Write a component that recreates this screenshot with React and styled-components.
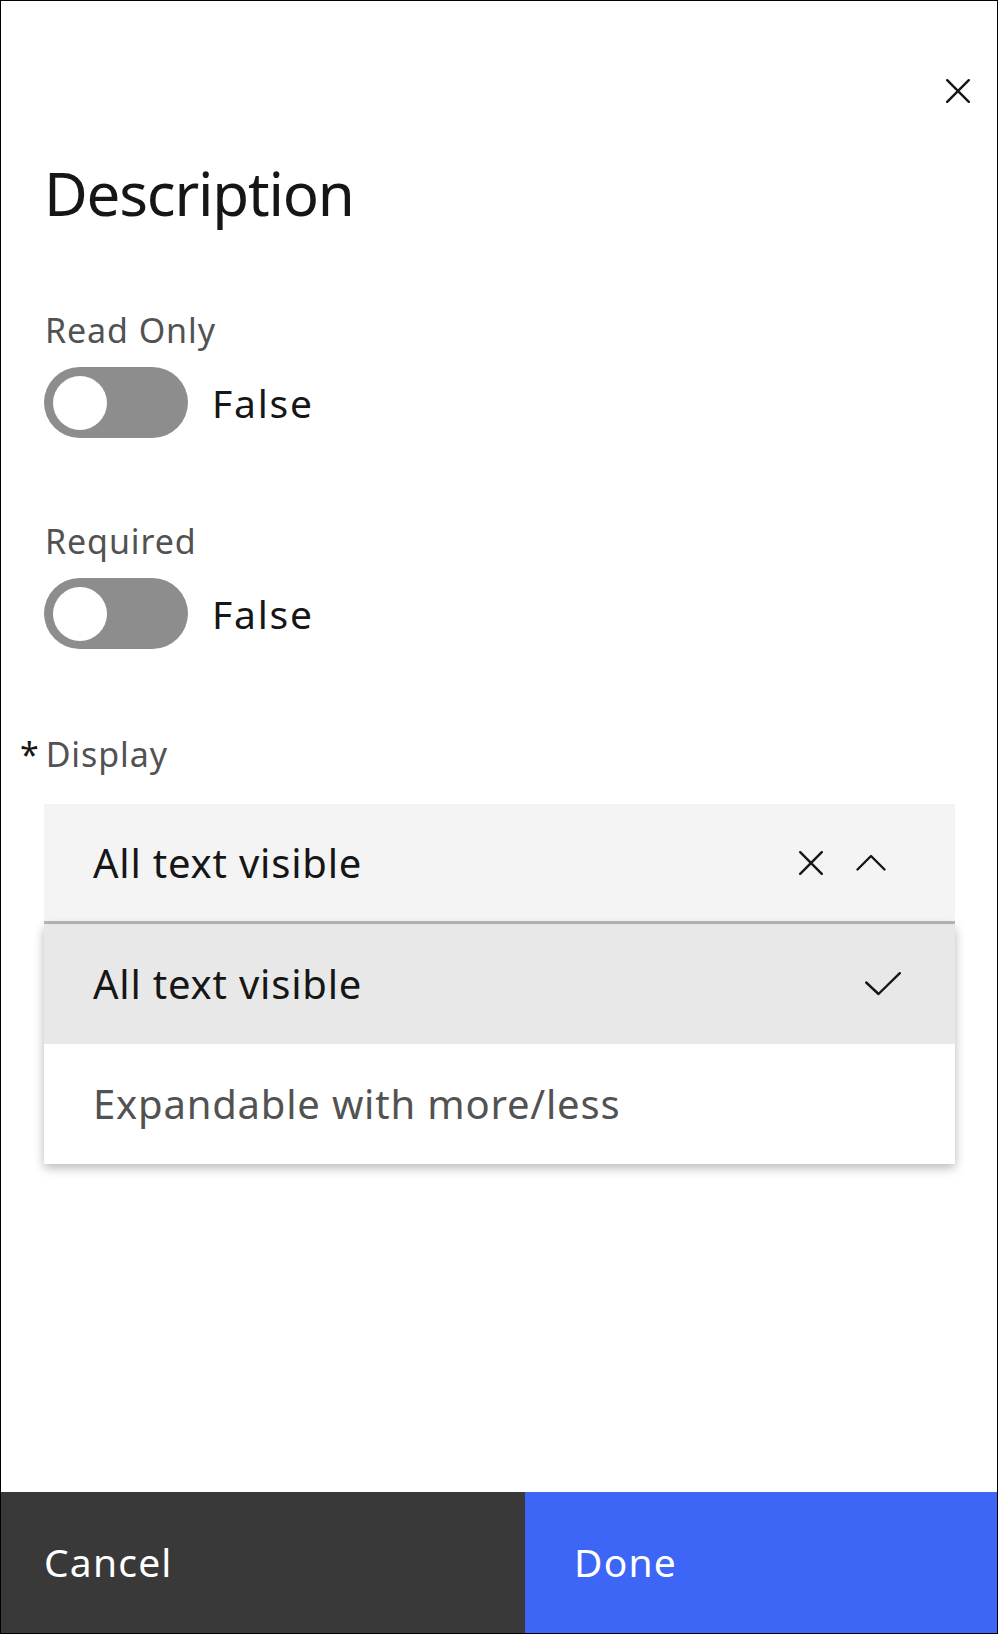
import React, { useState } from "react";
import styled, { createGlobalStyle } from "styled-components";

const GlobalStyle = createGlobalStyle`
  html, body {
    margin: 0;
    padding: 0;
    background: #ffffff;
  }
  * {
    box-sizing: border-box;
  }
`;

const options = [
  { id: "all", label: "All text visible" },
  { id: "expand", label: "Expandable with more/less" },
];

export default function App() {
  const [readOnly, setReadOnly] = useState(false);
  const [required, setRequired] = useState(false);
  const [display, setDisplay] = useState("all");

  const current = options.find((o) => o.id === display);

  return (
    <>
      <GlobalStyle />
      <Panel>
        <Header>
          <CloseButton aria-label="Close">
            <CrossIcon />
          </CloseButton>
        </Header>
        <Title>Description</Title>

        <Field $top={90}>
          <Label>Read Only</Label>
          <ToggleRow>
            <Toggle $on={readOnly} onClick={() => setReadOnly(!readOnly)}>
              <Knob />
            </Toggle>
            <ToggleText>{readOnly ? "True" : "False"}</ToggleText>
          </ToggleRow>
        </Field>

        <Field $top={86}>
          <Label>Required</Label>
          <ToggleRow>
            <Toggle $on={required} onClick={() => setRequired(!required)}>
              <Knob />
            </Toggle>
            <ToggleText>{required ? "True" : "False"}</ToggleText>
          </ToggleRow>
        </Field>

        <Field $top={88}>
          <Label $required>Display</Label>
          <SelectWrap>
            <SelectBox>
              <SelectValue>{current.label}</SelectValue>
              <SelectIcons>
                <CrossIcon />
                <ChevronUp />
              </SelectIcons>
            </SelectBox>
            <Menu>
              {options.map((o) => (
                <MenuItem
                  key={o.id}
                  $selected={o.id === display}
                  onClick={() => setDisplay(o.id)}
                >
                  <span>{o.label}</span>
                  {o.id === display && <CheckIcon />}
                </MenuItem>
              ))}
            </Menu>
          </SelectWrap>
        </Field>

        <Footer>
          <FooterButton $kind="secondary">Cancel</FooterButton>
          <FooterButton $kind="primary">Done</FooterButton>
        </Footer>
      </Panel>
    </>
  );
}

const CrossIcon = () => (
  <svg width="24" height="24" viewBox="0 0 24 24" fill="none">
    <path
      d="M1.2 1.2 L22.8 22.8 M22.8 1.2 L1.2 22.8"
      stroke="#161616"
      strokeWidth="2.4"
      strokeLinecap="round"
    />
  </svg>
);

const ChevronUp = () => (
  <svg width="30" height="17" viewBox="0 0 30 17" fill="none">
    <polyline
      points="1.5,15.5 15,2 28.5,15.5"
      stroke="#161616"
      strokeWidth="2.4"
      strokeLinecap="round"
      strokeLinejoin="round"
    />
  </svg>
);

const CheckIcon = () => (
  <svg width="36" height="24" viewBox="0 0 36 24" fill="none">
    <polyline
      points="1.2,10.5 13.5,22 34.8,1.2"
      stroke="#161616"
      strokeWidth="2.4"
      strokeLinecap="round"
      strokeLinejoin="round"
    />
  </svg>
);

const Panel = styled.div`
  width: 998px;
  height: 1634px;
  border: 1px solid #000000;
  background: #ffffff;
  display: flex;
  flex-direction: column;
  font-family: "Noto Sans", "Open Sans", sans-serif;
  color: #161616;
`;

const Header = styled.header`
  display: flex;
  justify-content: flex-end;
  padding: 58px 7px 0 0;
`;

const CloseButton = styled.button`
  width: 64px;
  height: 64px;
  border: none;
  background: transparent;
  padding: 0;
  display: flex;
  align-items: center;
  justify-content: center;
  cursor: pointer;
`;

const Title = styled.h1`
  margin: 40px 0 0;
  padding: 0 43px 0 43px;
  font-size: 60px;
  line-height: 60px;
  font-weight: 400;
  letter-spacing: -1.2px;
  color: #161616;
`;

const Field = styled.section`
  margin-top: ${(p) => p.$top}px;
  padding: 0 42px 0 43px;
  display: flex;
  flex-direction: column;
`;

const Label = styled.label`
  display: block;
  margin-left: 1px;
  font-size: 34px;
  line-height: 34px;
  letter-spacing: 0.9px;
  color: #525252;

  ${(p) =>
    p.$required &&
    `
    &::before {
      content: "*";
      margin-left: -25px;
      margin-right: 6px;
      color: #161616;
    }
  `}
`;

const ToggleRow = styled.div`
  display: flex;
  align-items: center;
  gap: 24px;
  margin-top: 20px;
`;

const Toggle = styled.button`
  width: 144px;
  height: 71px;
  border: none;
  border-radius: 36px;
  background: ${(p) => (p.$on ? "#24a148" : "#8d8d8d")};
  padding: 0 8.5px;
  display: flex;
  align-items: center;
  justify-content: ${(p) => (p.$on ? "flex-end" : "flex-start")};
  cursor: pointer;
`;

const Knob = styled.span`
  width: 54px;
  height: 54px;
  border-radius: 50%;
  background: #ffffff;
`;

const ToggleText = styled.span`
  font-size: 39px;
  line-height: 39px;
  letter-spacing: 1.8px;
  color: #161616;
`;

const SelectWrap = styled.div`
  position: relative;
  margin-top: 33px;
`;

const SelectBox = styled.div`
  height: 120px;
  background: #f4f4f4;
  border-bottom: 3px solid #b8b8b8;
  display: flex;
  align-items: center;
  justify-content: space-between;
  padding: 0 69px 0 49px;
`;

const SelectValue = styled.span`
  font-size: 40px;
  line-height: 40px;
  letter-spacing: 0.8px;
  color: #161616;
`;

const SelectIcons = styled.div`
  display: flex;
  align-items: center;
  gap: 33px;
`;

const Menu = styled.ul`
  position: absolute;
  top: 100%;
  left: 0;
  right: 0;
  margin: 0;
  padding: 0;
  list-style: none;
  background: #ffffff;
  box-shadow: 0 4px 10px rgba(0, 0, 0, 0.28);
  z-index: 2;
`;

const MenuItem = styled.li`
  height: 120px;
  display: flex;
  align-items: center;
  justify-content: space-between;
  padding: 0 54px 0 49px;
  background: ${(p) => (p.$selected ? "#e8e8e8" : "#ffffff")};
  color: ${(p) => (p.$selected ? "#161616" : "#525252")};
  font-size: 40px;
  line-height: 40px;
  letter-spacing: 0.8px;
  cursor: pointer;
`;

const Footer = styled.footer`
  margin-top: auto;
  display: flex;
  height: 141px;
`;

const FooterButton = styled.button`
  flex: ${(p) => (p.$kind === "primary" ? "0 0 472px" : "1 1 auto")};
  border: none;
  display: flex;
  align-items: center;
  padding: 0 0 2px ${(p) => (p.$kind === "primary" ? "49px" : "43px")};
  font-family: "Noto Sans", "Open Sans", sans-serif;
  font-size: 39px;
  line-height: 39px;
  letter-spacing: 1.2px;
  color: #ffffff;
  background: ${(p) => (p.$kind === "primary" ? "#3e66f6" : "#393939")};
  cursor: pointer;
`;
